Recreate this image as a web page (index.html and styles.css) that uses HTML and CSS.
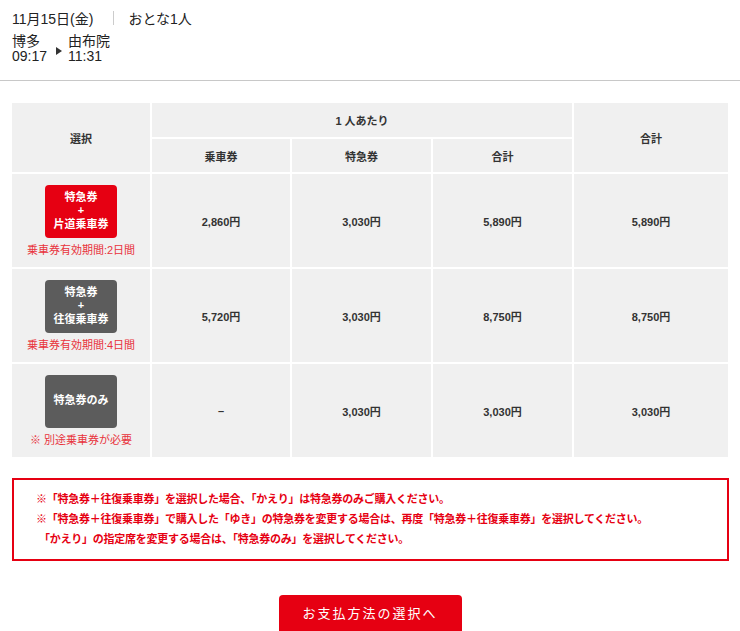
FILE: index.html
```html
<!DOCTYPE html>
<html lang="ja">
<head>
<meta charset="utf-8">
<link rel="stylesheet" href="styles.css">
</head>
<body>
<header class="summary">
  <div class="date-row">
    <span class="date">11月15日(金)</span>
    <span class="sep"></span>
    <span class="pax">おとな1人</span>
  </div>
  <div class="route-row">
    <div class="station"><div class="st-name">博多</div><div class="st-time">09:17</div></div>
    <span class="arrow"></span>
    <div class="station"><div class="st-name">由布院</div><div class="st-time">11:31</div></div>
  </div>
</header>
<main class="main">
  <table class="fare">
    <colgroup>
      <col class="c1"><col class="c2"><col class="c3"><col class="c4"><col class="c5">
    </colgroup>
    <thead>
      <tr class="h1">
        <th rowspan="2">選択</th>
        <th colspan="3">1 人あたり</th>
        <th rowspan="2">合計</th>
      </tr>
      <tr class="h2">
        <th>乗車券</th>
        <th>特急券</th>
        <th>合計</th>
      </tr>
    </thead>
    <tbody>
      <tr>
        <td>
          <div class="pick red">特急券<br>+<br>片道乗車券</div>
          <div class="cap">乗車券有効期間:2日間</div>
        </td>
        <td>2,860円</td>
        <td>3,030円</td>
        <td>5,890円</td>
        <td>5,890円</td>
      </tr>
      <tr>
        <td>
          <div class="pick gray">特急券<br>+<br>往復乗車券</div>
          <div class="cap">乗車券有効期間:4日間</div>
        </td>
        <td>5,720円</td>
        <td>3,030円</td>
        <td>8,750円</td>
        <td>8,750円</td>
      </tr>
      <tr>
        <td>
          <div class="pick gray">特急券のみ</div>
          <div class="cap">※ 別途乗車券が必要</div>
        </td>
        <td>&ndash;</td>
        <td>3,030円</td>
        <td>3,030円</td>
        <td>3,030円</td>
      </tr>
    </tbody>
  </table>
  <div class="notice">
    <p>※「特急券＋往復乗車券」を選択した場合、「かえり」は特急券のみご購入ください。</p>
    <p>※「特急券＋往復乗車券」で購入した「ゆき」の特急券を変更する場合は、再度「特急券＋往復乗車券」を選択してください。</p>
    <p class="indent">「かえり」の指定席を変更する場合は、「特急券のみ」を選択してください。</p>
  </div>
  <div class="actions">
    <button class="next">お支払方法の選択へ</button>
  </div>
</main>
</body>
</html>
```
FILE: styles.css
```css
* { box-sizing: border-box; }
html, body { margin: 0; padding: 0; background: #fff; }
body {
  font-family: "Liberation Sans", "Noto Sans CJK JP", sans-serif;
  color: #333;
  width: 740px;
  overflow: hidden;
}
.summary {
  height: 81px;
  border-bottom: 1px solid #c8c8c8;
  padding: 9px 12px 0;
  font-size: 14px;
  color: #222;
}
.date-row {
  display: flex;
  align-items: center;
  height: 17px;
}
.sep {
  width: 1px;
  height: 14px;
  background: #ccc;
  margin: 0 14px 0 20px;
}
.route-row {
  display: flex;
  align-items: center;
  margin-top: 8px;
}
.station { line-height: 15px; }
.arrow {
  width: 0; height: 0;
  border-left: 6px solid #333;
  border-top: 4px solid transparent;
  border-bottom: 4px solid transparent;
  margin: 4px 6px 0 9px;
}
.main { padding: 20px 10px 0; }
.fare {
  border-collapse: separate;
  border-spacing: 2px;
  width: 720px;
  table-layout: fixed;
  font-size: 11px;
}
.c1 { width: 138px; }
.c2 { width: 138px; }
.c3 { width: 139px; }
.c4 { width: 139px; }
.c5 { width: 154px; }
.fare th, .fare td {
  background: #f0f0f0;
  text-align: center;
  vertical-align: middle;
  font-weight: bold;
  color: #333;
  padding: 0;
}
.h1 th { height: 34px; }
.h2 th { height: 33px; }
.fare td { height: 93px; padding: 10px 0; }
.pick {
  width: 72px;
  height: 53px;
  margin: 0 auto;
  border-radius: 4px;
  color: #fff;
  display: flex;
  align-items: center;
  justify-content: center;
  line-height: 13.5px;
  font-weight: bold;
}
.pick.red { background: #e60012; }
.pick.gray { background: #5c5c5c; }
.cap {
  margin-top: 6px;
  color: #e8333c;
  font-weight: normal;
  font-size: 11px;
  line-height: 13px;
}
.notice {
  margin: 19px 0 0 2px;
  width: 717px;
  border: 2px solid #e60012;
  padding: 9px 22px 10px;
  color: #e60012;
  font-size: 11px;
  font-weight: bold;
  letter-spacing: -0.25px;
}
.notice p { margin: 0; line-height: 20px; }
.notice .indent { padding-left: 3px; }
.actions {
  display: flex;
  justify-content: center;
  margin-top: 34px;
}
.next {
  width: 183px;
  height: 40px;
  border: 0;
  border-radius: 4px;
  background: #e60012;
  color: #fff;
  font-family: inherit;
  font-size: 13px;
  letter-spacing: 2px;
  padding: 0 0 6px;
}
```
